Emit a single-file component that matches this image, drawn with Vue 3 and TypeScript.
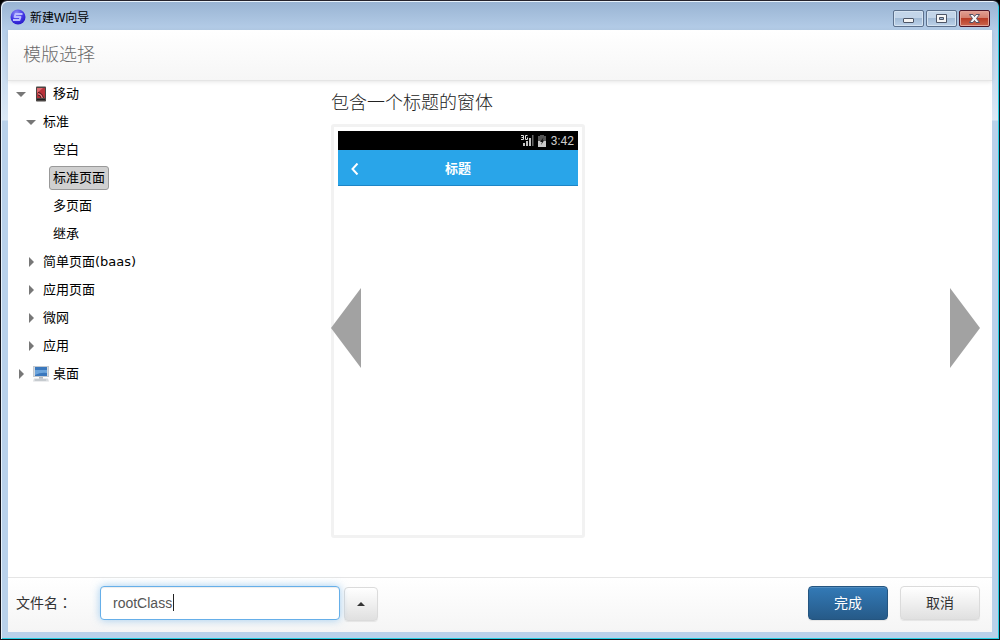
<script setup lang="ts">
import { ref } from 'vue'

interface TreeRow {
  label: string
  level: number
  state: 'open' | 'closed' | 'leaf'
  icon?: 'phone' | 'desktop'
}

const rows: TreeRow[] = [
  { label: '移动', level: 0, state: 'open', icon: 'phone' },
  { label: '标准', level: 1, state: 'open' },
  { label: '空白', level: 2, state: 'leaf' },
  { label: '标准页面', level: 2, state: 'leaf' },
  { label: '多页面', level: 2, state: 'leaf' },
  { label: '继承', level: 2, state: 'leaf' },
  { label: '简单页面(baas)', level: 1, state: 'closed' },
  { label: '应用页面', level: 1, state: 'closed' },
  { label: '微网', level: 1, state: 'closed' },
  { label: '应用', level: 1, state: 'closed' },
  { label: '桌面', level: 0, state: 'closed', icon: 'desktop' },
]

const selected = ref('标准页面')
const fileName = ref('rootClass')
</script>

<template>
  <div class="window">
    <header class="titlebar">
      <svg class="logo" viewBox="0 0 16 16">
        <defs>
          <radialGradient id="ball" cx="0.4" cy="0.25" r="0.8">
            <stop offset="0" stop-color="#8f8cf5" />
            <stop offset="0.5" stop-color="#4a3fe8" />
            <stop offset="1" stop-color="#2416c8" />
          </radialGradient>
        </defs>
        <circle cx="8" cy="8" r="7.5" fill="url(#ball)" />
        <path d="M12.500 5H5.500L4.500 8H10.500L9.500 11H3" fill="none" stroke="#b9bcff" stroke-width="1.8" stroke-linejoin="round" />
      </svg>
      <span class="caption">新建W向导</span>
      <div class="controls">
        <button class="ctl" aria-label="最小化">
          <svg viewBox="0 0 29 15"><rect x="9.5" y="7.5" width="10" height="4" rx="0.5" fill="#f4f4f4" stroke="#4d5566" /></svg>
        </button>
        <button class="ctl" aria-label="最大化">
          <svg viewBox="0 0 29 15"><path d="M9.500 3.500h10v8h-10zM12.500 6.500v2h4v-2z" fill="#f6f6f6" fill-rule="evenodd" stroke="#4d5566" /></svg>
        </button>
        <button class="ctl close" aria-label="关闭">
          <svg viewBox="0 0 29 15"><path d="M9.500 3.500h3.500l1.500 2 1.500-2h3.500l-3 4 3 4h-3.500l-1.500-2-1.500 2h-3.500l3-4z" fill="#f6f6f6" stroke="#525266" /></svg>
        </button>
      </div>
    </header>

    <div class="client">
      <h1 class="heading">模版选择</h1>

      <main class="body">
        <ul class="tree">
          <li v-for="row in rows" :key="row.label" class="row" :class="'level-' + row.level">
            <span class="twist" :class="row.state"></span>
            <svg v-if="row.icon === 'phone'" class="icon" viewBox="0 0 16 16">
              <rect x="3" y="0.500" width="10" height="15" rx="0.8" fill="#4a4543" />
              <rect x="4" y="2" width="8" height="10" fill="#b8323a" />
              <path d="M4 2h6L4 7z" fill="#dd6b70" />
              <path d="M5 6.500q4 0 5.500 5.500M5 9q2.500 0 3 3" fill="none" stroke="#4c1f26" stroke-width="1" />
              <path d="M5 7.700q3.500 0.300 4.400 4.300" fill="none" stroke="#e7b5ac" stroke-width="0.8" />
              <path d="M4 13.500h8" stroke="#211f22" />
            </svg>
            <svg v-if="row.icon === 'desktop'" class="icon" viewBox="0 0 16 16">
              <rect x="0.500" y="0.500" width="15" height="10" fill="#d6dbe0" stroke="#c4cad0" />
              <rect x="2" y="1" width="12" height="9" fill="#3b78bd" />
              <path d="M2 4h12v3Q8 6 2 9z" fill="#6da5dc" />
              <path d="M6 11h4v2H6z" fill="#b4bac0" />
              <path d="M1 12.500h14l1 3H0z" fill="#d9dcdf" />
              <path d="M2 14h11" stroke="#b4babf" />
            </svg>
            <button class="node" :class="{ selected: selected === row.label }" @click="selected = row.label">{{ row.label }}</button>
          </li>
        </ul>

        <section class="preview">
          <h2 class="preview-title">包含一个标题的窗体</h2>
          <div class="phone">
            <div class="status">
              <svg class="signal" viewBox="0 0 13 13">
                <path d="M0 1.500h2.500v4h-2.500M0.500 3.500h2M6.500 1.500H4.500V5.500H6.500V3.500" fill="none" stroke="#ddd" />
                <path d="M2 12v-3h2v3zM5 12V7h2v5zM8 12V4h2v8z" fill="#c4c4c4" />
                <path d="M11 12V1h1.500v11z" fill="#666" />
              </svg>
              <svg class="battery" viewBox="0 0 8 12">
                <path d="M2 0h4v1h2v5H0V1h2z" fill="#555" />
                <path d="M0 6h8v6H0z" fill="#c8c8c8" />
                <path d="M5.500 2.500L2 7h2l-1 3 3-4.500H4.500z" fill="#111" />
              </svg>
              <span>3:42</span>
            </div>
            <div class="appbar">
              <svg class="back" viewBox="0 0 8 12"><path d="M6.500 0.500L1.500 6l5 5.500" fill="none" stroke="#fff" stroke-width="2" /></svg>
              <strong>标题</strong>
            </div>
          </div>
          <button class="arrow prev" aria-label="上一个"></button>
          <button class="arrow next" aria-label="下一个"></button>
        </section>
      </main>

      <footer class="footer">
        <label class="label" for="file">文件名<span lang="zh-TW">：</span></label>
        <div class="field">
          <input id="file" v-model="fileName" type="text" />
          <i class="cursor"></i>
        </div>
        <button class="btn drop" aria-label="展开"><span class="caret-up"></span></button>
        <button class="btn primary">完成</button>
        <button class="btn">取消</button>
      </footer>
    </div>
  </div>
</template>

<style>
body {
  background: #000;
}
</style>

<style scoped>
* {
  box-sizing: border-box;
}

button {
  padding: 0;
  border: 0;
  background: none;
  font: inherit;
  color: inherit;
}

.window {
  display: flex;
  flex-direction: column;
  min-height: 100vh;
  padding: 2px 7px 7px;
  border: 1px solid #14141c;
  border-top-color: #25232c;
  border-radius: 7px 7px 0 0;
  background: linear-gradient(#98b3d2 0, #b6cee9 30px, #dbe8f5 119px, #b9d1ea 120px);
  box-shadow: inset 1px 1px #e8f2fb, inset -1px -1px #24cfe3;
  font-family: "Liberation Sans", "Noto Sans CJK SC", sans-serif;
}

.titlebar {
  display: flex;
  align-items: center;
  height: 27px;
  margin: 0 -7px;
  padding: 3px 9px 0;
  color: #000;
}

.logo {
  width: 16px;
  height: 16px;
  margin-bottom: 2px;
}

.caption {
  margin-left: 4px;
  font-size: 12px;
  line-height: 20px;
}

.controls {
  display: flex;
  gap: 2px;
  margin-left: auto;
}

.ctl {
  width: 31px;
  height: 17px;
  border: 1px solid #5c708c;
  border-radius: 2px;
  background: linear-gradient(#c3d5e9 0 45%, #a2bbd6 50%, #bdd2e9);
  box-shadow: inset 0 0 0 1px #d5e3f1;
}

.ctl svg {
  display: block;
  width: 29px;
  height: 15px;
}

.close {
  border-color: #4c1426;
  background: linear-gradient(#e2a094 0, #d5806f 45%, #b93c26 50%, #cb664f);
  box-shadow: inset 0 0 0 1px #e2a397;
}

.client {
  display: flex;
  flex: 1;
  flex-direction: column;
  background: #fff;
}

.heading {
  height: 51px;
  margin: 0;
  padding-left: 15px;
  border-bottom: 1px solid #e5e5e5;
  background: linear-gradient(#fff, #f6f6f6);
  box-shadow: 0 1px 4px #0000001a;
  color: #6a6a6a;
  font-size: 18px;
  font-weight: 300;
  line-height: 50px;
}

.body {
  display: flex;
  flex: 1;
}

.tree {
  width: 323px;
  margin: -1px 0 0;
  padding: 0;
  list-style: none;
  color: #000;
  font-family: "DejaVu Sans", "Noto Sans CJK SC", sans-serif;
  font-size: 13px;
}

.row {
  display: flex;
  align-items: center;
  height: 28px;
}

.level-0 {
  padding-left: 8px;
}

.level-1 {
  padding-left: 18px;
}

.level-2 {
  padding-left: 28px;
}

.twist {
  display: flex;
  align-items: center;
  justify-content: center;
  width: 10px;
  height: 10px;
  margin-right: 3px;
}

.open::before {
  border: 5px solid transparent;
  border-top-color: #777;
  border-bottom-width: 0;
  content: "";
}

.closed::before {
  border: 5px solid transparent;
  border-left-color: #777;
  border-right-width: 0;
  content: "";
}

.icon {
  width: 16px;
  height: 16px;
  margin-left: 4px;
}

.node {
  height: 24px;
  padding: 0 3px;
  border: 1px solid transparent;
  border-radius: 3px;
  line-height: 22px;
}

.selected {
  border-color: #999;
  background: #d0d0d0;
}

.preview {
  position: relative;
  flex: 1;
}

.preview-title {
  margin: 7px 0 6px;
  color: #222;
  font-size: 18px;
  font-weight: 300;
  line-height: 30px;
}

.phone {
  width: 254px;
  height: 414px;
  padding: 4px;
  border: 3px solid #f2f2f2;
  border-radius: 3px;
}

.status {
  display: flex;
  align-items: center;
  justify-content: flex-end;
  height: 19px;
  padding-right: 4px;
  background: #000;
  color: #ccc;
  font-family: Roboto, sans-serif;
  font-size: 12px;
}

.signal {
  width: 13px;
  height: 13px;
  margin-right: 4px;
}

.battery {
  width: 8px;
  height: 12px;
  margin-right: 5px;
}

.appbar {
  position: relative;
  height: 36px;
  border-bottom: 1px solid #1d85c6;
  background: #29a5e9;
  color: #fff;
  font-size: 13px;
  line-height: 38px;
  text-align: center;
}

.back {
  position: absolute;
  top: 13px;
  left: 13px;
  width: 8px;
  height: 12px;
}

.arrow {
  position: absolute;
  top: 207px;
  width: 30px;
  height: 80px;
  background: #a2a2a2;
}

.prev {
  left: 0;
  clip-path: polygon(0 50%, 100% 0, 100% 100%);
}

.next {
  right: 12px;
  clip-path: polygon(0 0, 100% 50%, 0 100%);
}

.footer {
  display: flex;
  align-items: center;
  height: 55px;
  padding: 0 12px 4px 8px;
  border-top: 1px solid #e5e5e5;
  background: linear-gradient(#fff, #f5f5f5);
  color: #333;
  font-size: 14px;
}

.label {
  width: 84px;
  padding-bottom: 2px;
}

.label span {
  font-family: "Noto Sans CJK TC", sans-serif;
}

.field {
  position: relative;
  width: 240px;
}

.field input {
  display: block;
  width: 100%;
  height: 34px;
  padding: 0 12px;
  border: 1px solid #66afe9;
  border-radius: 4px;
  outline: 0;
  background: #fff;
  box-shadow: inset 0 1px 1px #00000013, 0 0 8px #66afe999;
  color: #555;
  font: 14px "Liberation Sans", sans-serif;
}

.cursor {
  position: absolute;
  top: 8px;
  left: 73px;
  width: 1px;
  height: 17px;
  background: #222;
}

.btn {
  width: 80px;
  height: 34px;
  margin-left: 12px;
  padding-bottom: 2px;
  border: 1px solid #dbdbdb;
  border-radius: 4px;
  background: linear-gradient(#fff, #e0e0e0);
  box-shadow: inset 0 1px #ffffff26, 0 1px 1px #00000013;
}

.drop {
  display: flex;
  align-items: center;
  justify-content: center;
  width: 34px;
  margin: 2px auto 0 4px;
  padding: 0;
}

.caret-up {
  border: 4px solid transparent;
  border-top-width: 0;
  border-bottom-color: #333;
}

.primary {
  border-color: #245580;
  background: linear-gradient(#337ab7, #265a88);
  color: #fff;
}
</style>
